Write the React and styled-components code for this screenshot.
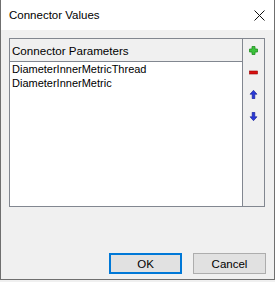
import React from "react";
import styled, { createGlobalStyle } from "styled-components";

const GlobalStyle = createGlobalStyle`
  html, body {
    margin: 0;
    padding: 0;
    background: #f0f0f0;
  }
  body {
    font-family: "Liberation Sans", Arial, sans-serif;
    color: #000;
  }
`;

const parameters = ["DiameterInnerMetricThread", "DiameterInnerMetric"];

const PlusIcon = () => (
  <svg width="9" height="9" viewBox="0 0 9 9">
    <path
      d="M3 0.5h3v2.5h2.5v3H6v2.5H3V6H0.5V3H3z"
      fill="#3cc23c"
      stroke="#1f8f1f"
      strokeWidth="0.8"
    />
  </svg>
);

const MinusIcon = () => (
  <svg width="9" height="9" viewBox="0 0 9 9">
    <rect x="0.5" y="3" width="8" height="3" fill="#d81010" stroke="#9a0000" strokeWidth="0.6" />
  </svg>
);

const ArrowUpIcon = () => (
  <svg width="9" height="9" viewBox="0 0 9 9">
    <path d="M4.5 0.3L8 4.2H5.8V8.7H3.2V4.2H1z" fill="#2a3ad8" stroke="#101a90" strokeWidth="0.6" />
  </svg>
);

const ArrowDownIcon = () => (
  <svg width="9" height="9" viewBox="0 0 9 9">
    <path d="M4.5 8.7L8 4.8H5.8V0.3H3.2V4.8H1z" fill="#2a3ad8" stroke="#101a90" strokeWidth="0.6" />
  </svg>
);

const CloseGlyph = () => (
  <svg width="11" height="11" viewBox="0 0 11 11">
    <path d="M0.5 0.5L10.5 10.5M10.5 0.5L0.5 10.5" stroke="#111" strokeWidth="1" />
  </svg>
);

export default function App() {
  return (
    <>
      <GlobalStyle />
      <Window>
        <TitleBar>
          <TitleText>Connector Values</TitleText>
          <CloseButton>
            <CloseGlyph />
          </CloseButton>
        </TitleBar>

        <Body>
          <Panel>
            <ListArea>
              <ListHeader>Connector Parameters</ListHeader>
              <ListItems>
                {parameters.map((p) => (
                  <ListItem key={p}>{p}</ListItem>
                ))}
              </ListItems>
            </ListArea>
            <SideBar>
              <ToolButton title="Add">
                <PlusIcon />
              </ToolButton>
              <ToolButton title="Remove">
                <MinusIcon />
              </ToolButton>
              <ToolButton title="Move up">
                <ArrowUpIcon />
              </ToolButton>
              <ToolButton title="Move down">
                <ArrowDownIcon />
              </ToolButton>
            </SideBar>
          </Panel>

          <Footer>
            <DialogButton $default>OK</DialogButton>
            <DialogButton>Cancel</DialogButton>
          </Footer>
        </Body>
      </Window>
    </>
  );
}

const Window = styled.div`
  width: 275px;
  height: 280px;
  box-sizing: border-box;
  display: flex;
  flex-direction: column;
  border: 1px solid #6f6f6f;
  border-top: none;
  background: #f0f0f0;
`;

const TitleBar = styled.div`
  height: 30px;
  flex-shrink: 0;
  display: flex;
  align-items: center;
  justify-content: space-between;
  padding: 0 9px 0 8px;
  background: #fff;
`;

const TitleText = styled.div`
  font-size: 11.5px;
  color: #000;
`;

const CloseButton = styled.div`
  display: flex;
  align-items: center;
  justify-content: center;
  width: 11px;
  height: 11px;
`;

const Body = styled.div`
  flex: 1;
  display: flex;
  flex-direction: column;
  padding: 8px 8px 5px 8px;
`;

const Panel = styled.div`
  height: 169px;
  margin-right: 1px;
  box-sizing: border-box;
  display: flex;
  border: 1px solid #828790;
  background: #fff;
`;

const ListArea = styled.div`
  flex: 1;
  display: flex;
  flex-direction: column;
  min-width: 0;
`;

const ListHeader = styled.div`
  height: 22px;
  flex-shrink: 0;
  display: flex;
  align-items: center;
  padding-left: 2px;
  font-size: 11.6px;
  background: #f0f0f0;
  border-bottom: 1px solid #828790;
`;

const ListItems = styled.div`
  flex: 1;
  background: #fff;
  padding-top: 0px;
`;

const ListItem = styled.div`
  height: 14px;
  line-height: 14px;
  padding-left: 2px;
  font-size: 11px;
  white-space: nowrap;
`;

const SideBar = styled.div`
  width: 21px;
  flex-shrink: 0;
  display: flex;
  flex-direction: column;
  background: #f0f0f0;
  border-left: 1px solid #828790;
`;

const ToolButton = styled.div`
  height: 22px;
  display: flex;
  align-items: center;
  justify-content: center;
`;

const Footer = styled.div`
  margin-top: auto;
  display: flex;
  justify-content: flex-end;
  gap: 11px;
`;

const DialogButton = styled.div`
  width: 73px;
  height: 21px;
  box-sizing: border-box;
  display: flex;
  align-items: center;
  justify-content: center;
  font-size: 11.5px;
  background: #e1e1e1;
  border: ${({ $default }) => ($default ? "2px solid #0078d7" : "1px solid #adadad")};
`;
